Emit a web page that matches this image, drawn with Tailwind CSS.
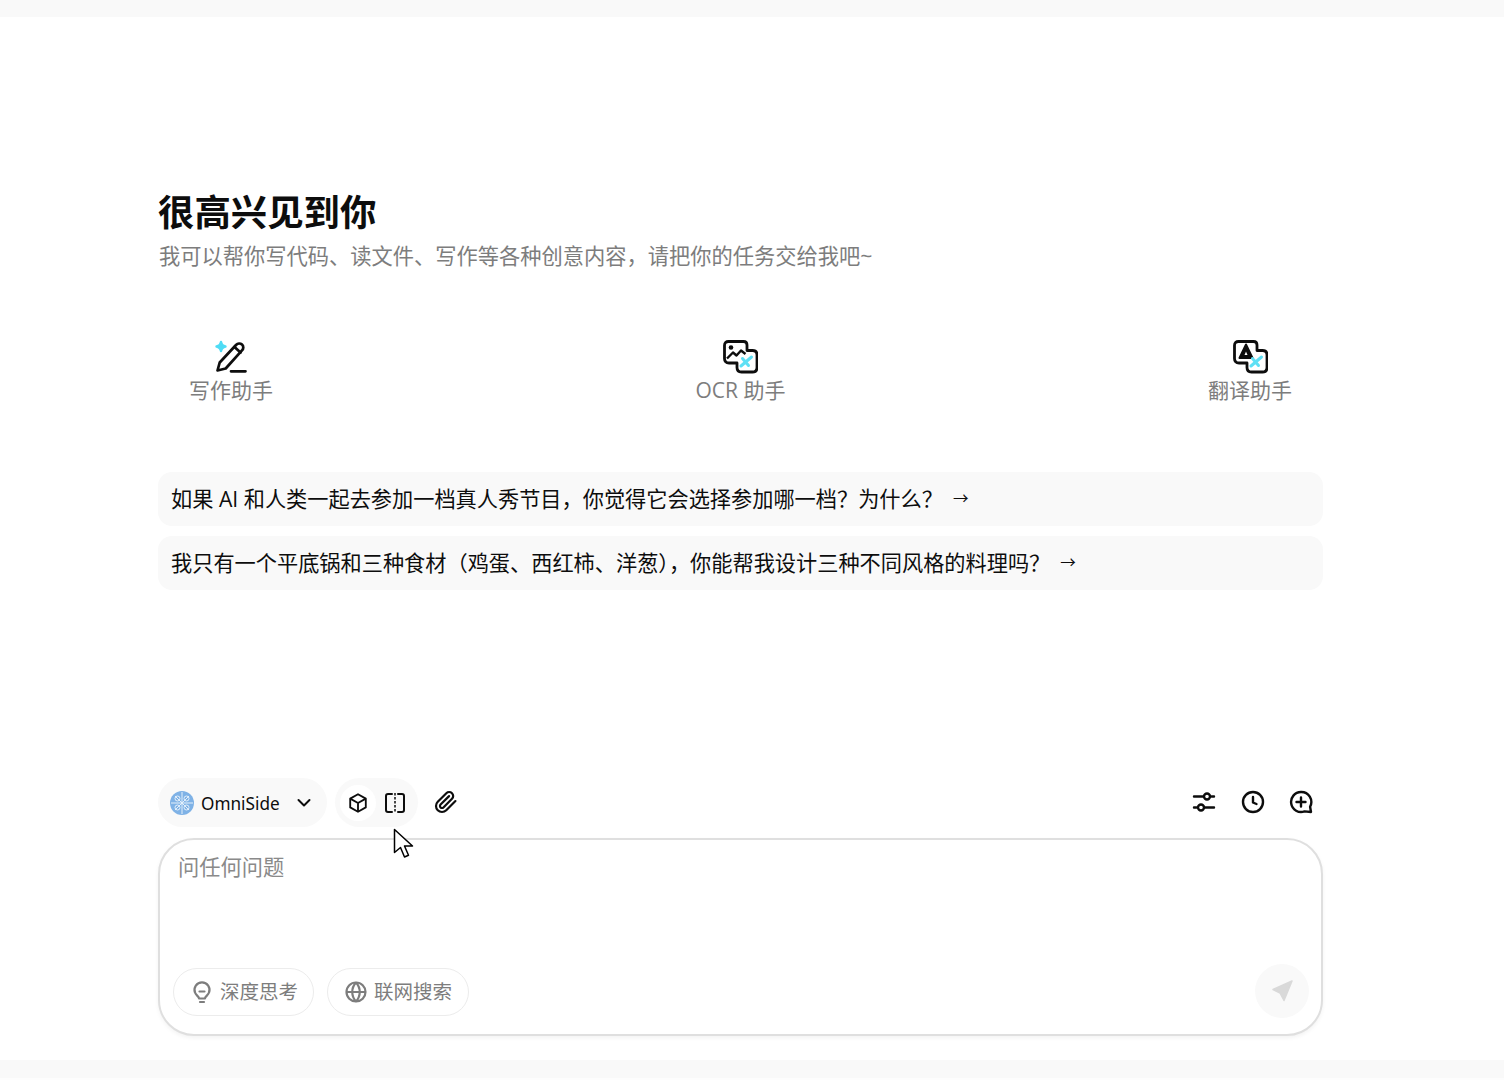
<!DOCTYPE html>
<html lang="zh-CN">
<head>
  <meta charset="UTF-8" />
  <title>OmniSide</title>
  <script src="https://cdn.jsdelivr.net/npm/@tailwindcss/browser@4"></script>
</head>
<body class="relative h-screen overflow-hidden bg-white flex flex-col font-['Open_Sans','Noto_Sans_CJK_SC',sans-serif] text-[#0d0d0d]">

  <div class="h-[17px] bg-[#f9f9f9]"></div>

  <main class="flex-1 w-[1165px] ml-[158px] flex flex-col">
    <!-- Greeting -->
    <h1 class="mt-[173px] text-[36.4px] leading-[44px] font-bold">很高兴见到你</h1>
    <p class="mt-[6px] ml-px text-[21.25px] leading-[32px] text-[#7d7d7d]">我可以帮你写代码、读文件、写作等各种创意内容，请把你的任务交给我吧~</p>

    <!-- Assistants -->
    <div class="mt-[67px] flex justify-between pl-[31px] pr-[31px]">
      <div class="flex flex-col items-center">
        <svg class="w-9 h-9" viewBox="0 0 36 36" fill="none">
          <path d="M8 3c.5 3 1.500 4 4.500 4.500C9.500 8 8.500 9 8 12c-.5-3-1.500-4-4.500-4.500C6.500 7 7.500 6 8 3z" fill="#4fdcf5" stroke="#4fdcf5" stroke-width="2.400" stroke-linejoin="round"/>
          <path d="M4.500 31.500l2.200-8L23 6c1.800-1.900 4.300-2 6-.4 1.700 1.600 1.700 4 0 5.800L12.700 29.500z" stroke="#0d0d0d" stroke-width="2.700" stroke-linejoin="round"/>
          <path d="M21.500 8l6 5.500M18 32.300h14.500" stroke="#0d0d0d" stroke-width="2.700" stroke-linecap="round"/>
        </svg>
        <span class="text-[21px] leading-[32px] text-[#7d7d7d] -mt-[1px]">写作助手</span>
      </div>
      <div class="flex flex-col items-center">
        <svg class="w-9 h-9" viewBox="0 0 36 36" fill="none">
          <path d="M6.500 2.500h15c2.200 0 3.500 1.300 3.500 3.500v5.500h5.500c2.800 0 4.500 1.700 4.500 4.500v12.500c0 2.800-1.700 4.500-4.500 4.500H19.500c-2.800 0-4.500-1.700-4.500-4.500V24H7c-3 0-4.500-1.500-4.500-4.500V6.500c0-2.500 1.500-4 4-4z" stroke="#0d0d0d" stroke-width="2.800" stroke-linejoin="round"/>
          <circle cx="9" cy="8.500" r="2.300" fill="#0d0d0d"/>
          <path d="M5 19.500l6-6 3.500 3 4.500-5 4.500 3.500" stroke="#0d0d0d" stroke-width="2.400" stroke-linejoin="round"/>
          <path d="M19 27l10.500-9M20.500 19.500l6 7" stroke="#5ee0f5" stroke-width="3" stroke-linecap="round"/>
        </svg>
        <span class="text-[21px] leading-[32px] text-[#7d7d7d] -mt-[1px]">OCR 助手</span>
      </div>
      <div class="flex flex-col items-center">
        <svg class="w-9 h-9" viewBox="0 0 36 36" fill="none">
          <path d="M6.500 2.500h15c2.200 0 3.500 1.300 3.500 3.500v5.500h5.500c2.800 0 4.500 1.700 4.500 4.500v12.500c0 2.800-1.700 4.500-4.500 4.500H19.500c-2.800 0-4.500-1.700-4.500-4.500V24H7c-3 0-4.500-1.500-4.500-4.500V6.500c0-2.500 1.500-4 4-4z" stroke="#0d0d0d" stroke-width="2.800" stroke-linejoin="round"/>
          <path d="M7.500 19L14 5.500 20.500 19z" fill="#0d0d0d" stroke="#0d0d0d" stroke-width="2" stroke-linejoin="round"/>
          <path d="M12.500 16h3L14 12.500z" fill="#fff"/>
          <path d="M19 27l10.500-9M20.500 19.500l6 7" stroke="#5ee0f5" stroke-width="3" stroke-linecap="round"/>
        </svg>
        <span class="text-[21px] leading-[32px] text-[#7d7d7d] -mt-[1px]">翻译助手</span>
      </div>
    </div>

    <!-- Suggestions -->
    <div class="mt-[66px] flex flex-col gap-[10px]">
      <div class="h-[54px] rounded-[14px] bg-[#f9f9f9] pl-[13px] flex items-center text-[21.2px]">如果 AI 和人类一起去参加一档真人秀节目，你觉得它会选择参加哪一档？为什么？<span class="ml-[10px] text-[15.500px]">→</span></div>
      <div class="h-[54px] rounded-[14px] bg-[#f9f9f9] pl-[13px] flex items-center text-[21.2px]">我只有一个平底锅和三种食材（鸡蛋、西红柿、洋葱），你能帮我设计三种不同风格的料理吗？<span class="ml-[10px] text-[15.500px]">→</span></div>
    </div>

    <!-- Toolbar -->
    <div class="mt-auto flex items-center h-[49px]">
      <div class="h-[49px] w-[169px] rounded-full bg-[#f9f9f9] flex items-center pl-[12px]">
        <svg class="w-6 h-6" viewBox="0 0 24 24" fill="none">
          <circle cx="12" cy="12" r="12" fill="#7fb2e6"/>
          <g stroke="#e4f0fb" stroke-width="1" fill="none">
            <circle cx="7.500" cy="7.500" r="2.500"/>
            <circle cx="16.500" cy="7.500" r="2.500"/>
            <circle cx="7.500" cy="16.500" r="2.500"/>
            <circle cx="16.500" cy="16.500" r="2.500"/>
            <path d="M12 1v22M1 12h22M5 5l14 14M19 5L5 19"/>
          </g>
        </svg>
        <span class="ml-[7px] mt-[2px] w-[95px] font-['Noto_Sans',sans-serif] text-[17.2px]">OmniSide</span>
        <svg class="w-4 h-4" viewBox="0 0 16 16" fill="none"><path d="M2.500 5L8 10.500 13.500 5" stroke="#0d0d0d" stroke-width="2" stroke-linecap="round" stroke-linejoin="round"/></svg>
      </div>
      <div class="ml-2 h-[49px] w-[83px] rounded-full bg-[#f9f9f9] flex items-center pl-[5px]">
        <div class="w-9 h-9 rounded-full bg-white flex items-center justify-center">
          <svg class="w-[22px] h-[22px]" viewBox="0 0 24 24" fill="none" stroke="#0d0d0d" stroke-width="2" stroke-linejoin="round"><path d="M12 2.500l8.500 4.700v9.600L12 21.500l-8.500-4.700V7.200z"/><path d="M3.500 7.200L12 12l8.500-4.800M12 12v9.500"/></svg>
        </div>
        <svg class="ml-[7px] w-6 h-6" viewBox="0 0 24 24" fill="none" stroke="#0d0d0d" stroke-width="2"><path d="M9 3H5a2 2 0 0 0-2 2v14a2 2 0 0 0 2 2h4M15 3h4a2 2 0 0 1 2 2v14a2 2 0 0 1-2 2h-4" stroke-linecap="round"/><path d="M12 2v20" stroke-width="1.500" stroke-dasharray="2.500 1.500"/></svg>
      </div>
      <svg class="ml-[16px] mb-[2px] w-6 h-6" viewBox="0 0 24 24" fill="none" stroke="#0d0d0d" stroke-width="2.200" stroke-linecap="round" stroke-linejoin="round"><path d="M21.440 11.050l-9.190 9.190a6 6 0 0 1-8.490-8.490l8.570-8.570A4 4 0 1 1 18 8.840l-8.590 8.570a2 2 0 0 1-2.830-2.830l8.490-8.480"/></svg>

      <div class="ml-auto mb-[2px] flex items-center gap-[24.5px] mr-[10px]">
        <svg class="w-6 h-6" viewBox="0 0 24 24" fill="none" stroke="#0d0d0d" stroke-width="2.400" stroke-linecap="round"><path d="M2 6.500h9M19.500 6.500H22M2 17.500h2.500M13 17.500h9"/><circle cx="15" cy="6.500" r="3"/><circle cx="9" cy="17.500" r="3"/></svg>
        <svg class="w-6 h-6" viewBox="0 0 24 24" fill="none" stroke="#0d0d0d" stroke-width="2.400" stroke-linecap="round" stroke-linejoin="round"><circle cx="12" cy="12" r="10"/><path d="M12 7v5.500l3.500 1.500"/></svg>
        <svg class="w-6 h-6" viewBox="0 0 24 24" fill="none" stroke="#0d0d0d" stroke-width="2.400" stroke-linecap="round" stroke-linejoin="round"><path d="M12 2a10 10 0 1 0 3.500 19.400L22 22l-.9-5.300A10 10 0 0 0 12 2z"/><path d="M12 7.500v9M7.500 12h9"/></svg>
      </div>
    </div>

    <!-- Input -->
    <div class="mt-[11px] mb-[24px] h-[198px] rounded-[36px] border-2 border-[#dfdfdf] shadow-[0_2px_4px_rgba(0,0,0,0.05)] bg-white flex flex-col">
      <div class="pl-[18px] pt-[11px] text-[21.25px] leading-[32px] text-[#8a8a8a]">问任何问题</div>
      <div class="mt-auto mb-[16px] pl-[13px] pr-[12px] flex items-end">
        <div class="mb-[2px] h-[48px] w-[141px] rounded-full border border-[#ececec] flex items-center pl-[16px] gap-[6px] text-[19.5px] text-[#7d7d7d]">
          <svg class="w-6 h-6" viewBox="0 0 24 24" fill="none" stroke="#7d7d7d" stroke-width="2.200" stroke-linecap="round" stroke-linejoin="round"><path d="M9 18.500c0-2-3-3-4-6a7.500 7.500 0 1 1 14 0c-1 3-4 4-4 6z"/><path d="M9.500 11.500h5M10 22h4"/></svg>
          深度思考
        </div>
        <div class="mb-[2px] ml-[13px] h-[48px] w-[142px] rounded-full border border-[#ececec] flex items-center pl-[16px] gap-[6px] text-[19.5px] text-[#7d7d7d]">
          <svg class="w-6 h-6" viewBox="0 0 24 24" fill="none" stroke="#7d7d7d" stroke-width="2.200"><circle cx="12" cy="12" r="9.500"/><path d="M2.500 12h19M12 2.500c-5 5.500-5 13.500 0 19M12 2.500c5 5.500 5 13.500 0 19"/></svg>
          联网搜索
        </div>
        <button class="ml-auto w-[54px] h-[54px] rounded-full bg-[#f9f9f9] flex items-center justify-center">
          <svg class="w-6 h-6" viewBox="0 0 24 24" fill="#d9d9d9" stroke="#d9d9d9" stroke-width="1.500" stroke-linejoin="round"><path d="M22 2L3 10.500l7 3.500 4 7.500z"/></svg>
        </button>
      </div>
    </div>
  </main>

  <div class="h-[18px] bg-[#f9f9f9]"></div>
  <div class="h-[2px] bg-[#fdfdfd]"></div>

  <!-- Mouse pointer in the screenshot -->
  <svg class="absolute left-[393px] top-[828px] w-[22px] h-[31px]" viewBox="0 0 22 31" fill="#fff" stroke="#000" stroke-width="1.500" stroke-linejoin="round">
    <path d="M1.500 1.500v23l6-5 4 9.500 4-1.700-4-9.300h8z"/>
  </svg>
</body>
</html>
